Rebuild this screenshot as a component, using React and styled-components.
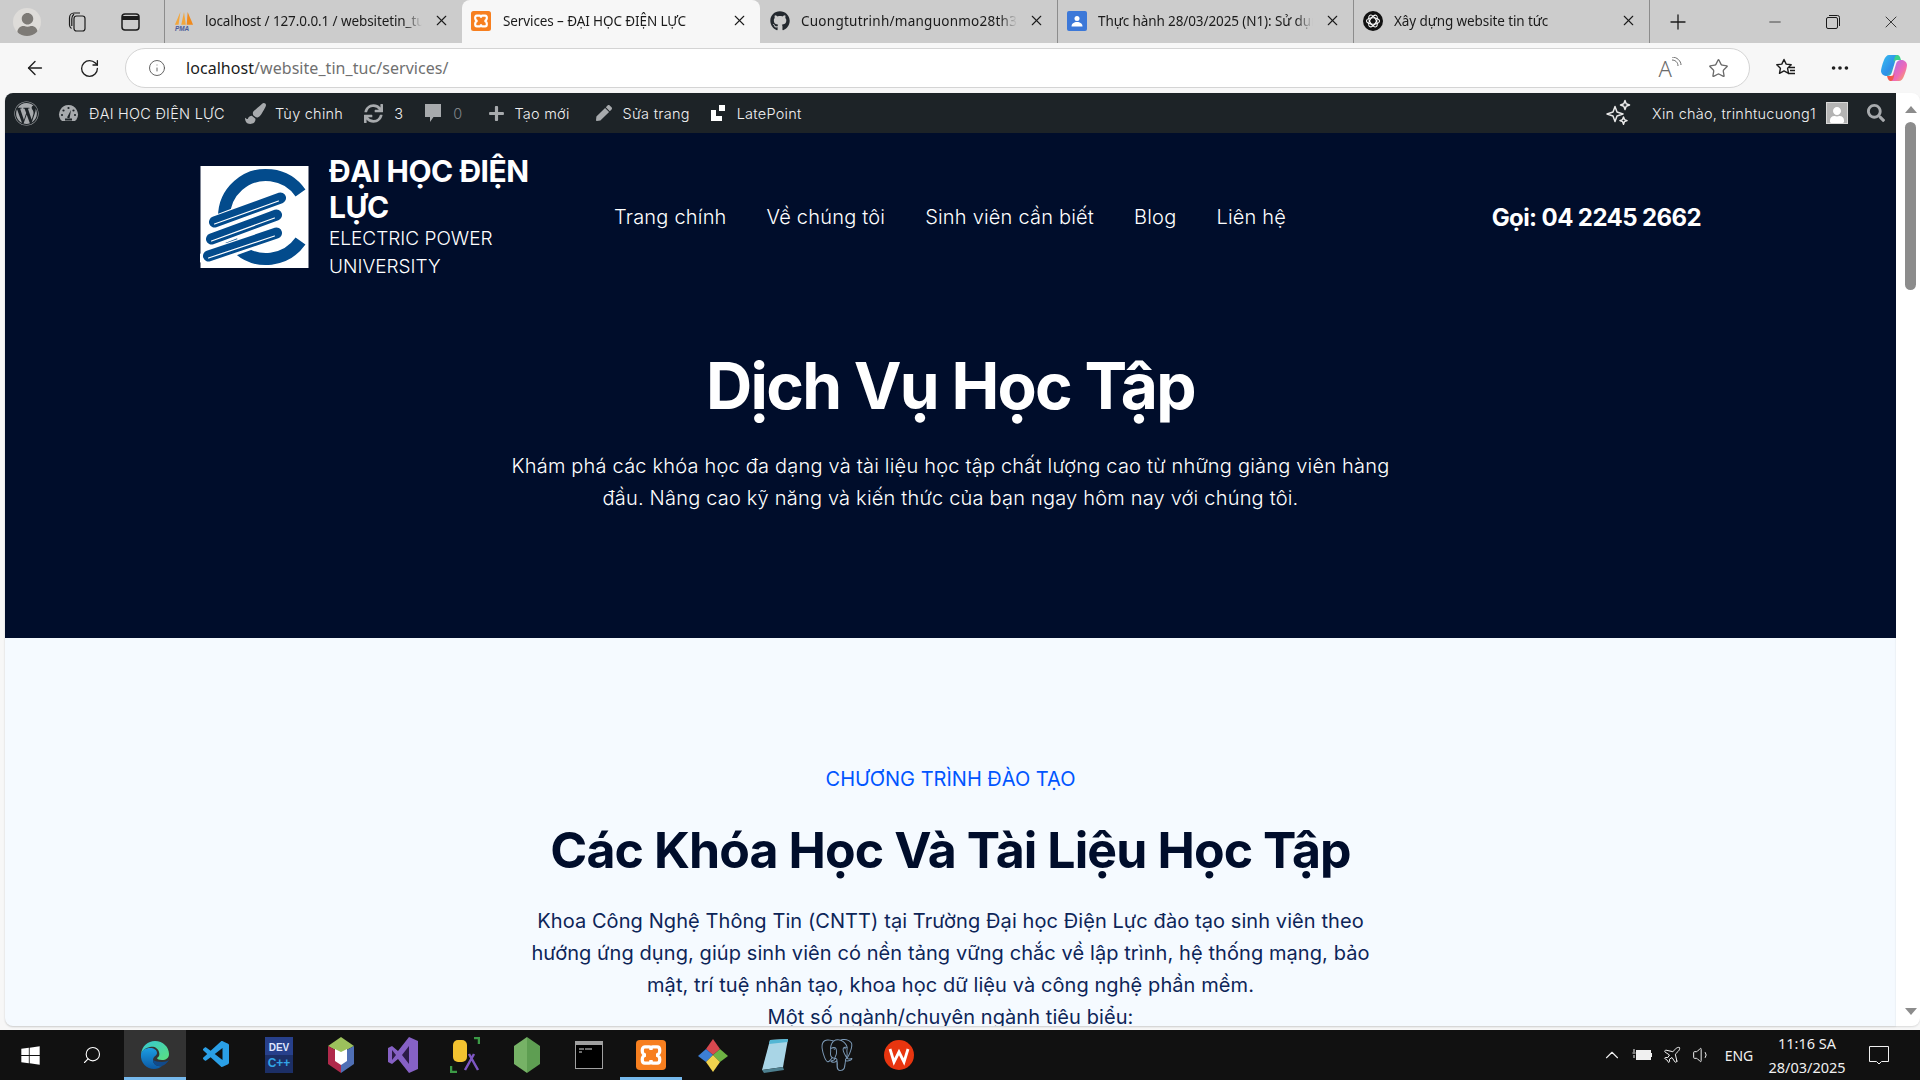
import React from "react";
import styled, { createGlobalStyle } from "styled-components";
import {
  ArrowLeft,
  RotateCw,
  Info,
  Star,
  Ellipsis,
  Plus,
  Minus,
  X,
  ChevronUp,
  Volume1,
  Plane,
  Search,
} from "lucide-react";
import {
  FaWordpress,
  FaPaintBrush,
  FaSync,
  FaPlus,
  FaPen,
  FaSearch,
  FaGithub,
  FaWindows,
  FaUser,
} from "react-icons/fa";
import { VscVscode } from "react-icons/vsc";
import { SiPostgresql } from "react-icons/si";

const GlobalStyle = createGlobalStyle`
  html, body { margin: 0; padding: 0; height: 100%; overflow: hidden; }
  body { font-family: Inter, "Liberation Sans", sans-serif; }
  * { box-sizing: border-box; }
`;

const Screen = styled.div`
  width: 1920px;
  height: 1080px;
  display: flex;
  flex-direction: column;
  background: #f7f7f7;
  overflow: hidden;
`;

/* ---- browser chrome ---- */
const TabStrip = styled.div`
  height: 43px;
  flex: none;
  display: flex;
  align-items: center;
  background: #cccccc;
  color: #1b1b1b;
  font-family: "Noto Sans", sans-serif;
`;
const StripButton = styled.div`
  width: ${(p) => p.$w || 52}px;
  height: 43px;
  flex: none;
  display: flex;
  align-items: center;
  justify-content: center;
`;
const Avatar = styled.div`
  width: 28px;
  height: 28px;
  border-radius: 50%;
  background: #dedcd9;
  overflow: hidden;
  display: flex;
  align-items: flex-end;
  justify-content: center;
  color: #7d7a76;
  font-size: 23px;
  line-height: 0;
`;
const Tab = styled.div`
  width: ${(p) => p.$w}px;
  height: 43px;
  flex: none;
  display: flex;
  align-items: center;
  padding: 0 12px 2px ${(p) => (p.$active ? 8 : 9)}px;
  gap: ${(p) => p.$gap ?? 12}px;
  font-size: 13.5px;
  background: ${(p) => (p.$active ? "#f7f7f7" : "transparent")};
  border-radius: ${(p) => (p.$active ? "8px 8px 0 0" : "0")};
  border-left: 1px solid ${(p) => (p.$sep ? "#8c8c8c" : "transparent")};
  background-clip: ${(p) => (p.$active ? "border-box" : "padding-box")};
`;
const TabIcon = styled.div`
  width: 20px;
  height: 20px;
  flex: none;
  display: flex;
  align-items: center;
  justify-content: center;
`;
const TabTitle = styled.div`
  flex: 1;
  min-width: 0;
  white-space: nowrap;
  overflow: hidden;
  letter-spacing: ${(p) => p.$ls ?? -0.1}px;
  mask-image: linear-gradient(90deg, #000 92%, transparent 100%);
`;
const NewTab = styled.div`
  width: 56px;
  height: 43px;
  flex: none;
  display: flex;
  align-items: center;
  justify-content: center;
  border-left: 1px solid #8c8c8c;
  background-clip: padding-box;
`;
const WindowControls = styled.div`
  margin-left: auto;
  display: flex;
  align-items: center;
`;
const WindowButton = styled.div`
  width: 58px;
  height: 43px;
  display: flex;
  align-items: center;
  justify-content: center;
`;

const Toolbar = styled.div`
  height: 50px;
  flex: none;
  display: flex;
  align-items: center;
  padding-left: 8px;
  color: #1f1f1f;
`;
const ToolButton = styled.div`
  width: ${(p) => p.$w || 54}px;
  height: 40px;
  flex: none;
  display: flex;
  align-items: center;
  justify-content: center;
`;
const AddressBar = styled.div`
  width: 1625px;
  height: 40px;
  flex: none;
  margin: 0 8px 0 9px;
  display: flex;
  align-items: center;
  background: #fff;
  border: 1px solid #d4d4d4;
  border-radius: 20px;
  padding-left: 22px;
  font-family: "Noto Sans", sans-serif;
  font-size: 16px;
`;
const UrlHost = styled.span`
  margin-left: 20px;
  color: #1b1b1b;
  letter-spacing: 0.05px;
`;
const UrlPath = styled.span`
  color: #707070;
  letter-spacing: 0.05px;
`;
const AddressActions = styled.div`
  margin-left: auto;
  display: flex;
  align-items: center;
  gap: 26px;
  padding-right: 20px;
  color: #6b6b6b;
`;
const ReadAloud = styled.div`
  font-size: 22px;
  line-height: 1;
  font-weight: 300;
  color: #6b6b6b;
  display: flex;
  align-items: flex-start;
`;

/* ---- page viewport ---- */
const Viewport = styled.div`
  flex: 1;
  min-height: 0;
  display: flex;
  padding: 0 0 4px 5px;
`;
const Page = styled.main`
  width: 1891px;
  height: 100%;
  overflow: hidden;
  background: #f5faff;
  border-radius: 8px 0 0 8px;
  box-shadow: 0 1px 2px rgba(0, 0, 0, 0.18);
`;
const Scrollbar = styled.div`
  width: 24px;
  height: 100%;
  background: #fff;
  border-radius: 0 8px 8px 0;
  box-shadow: 0 1px 2px rgba(0, 0, 0, 0.12);
  display: flex;
  flex-direction: column;
  align-items: center;
  padding: 13px 0 11px 5px;
`;
const ScrollArrow = styled.div`
  width: 0;
  height: 0;
  border-left: 6.5px solid transparent;
  border-right: 6.5px solid transparent;
  border-bottom: ${(p) => (p.$down ? "0" : "7px solid #8c8c8c")};
  border-top: ${(p) => (p.$down ? "7px solid #8c8c8c" : "0")};
`;
const ScrollThumb = styled.div`
  width: 11px;
  height: 168px;
  margin-top: 9px;
  margin-bottom: auto;
  border-radius: 6px;
  background: #8c8c8c;
`;

/* ---- wordpress admin bar ---- */
const AdminBar = styled.div`
  height: 40px;
  display: flex;
  align-items: center;
  background: #1d2327;
  color: #f0f0f1;
  font-size: 14.5px;
  font-weight: 300;
  letter-spacing: 0.25px;
  padding-left: 9px;
  white-space: nowrap;
`;
const AdminItem = styled.div`
  display: flex;
  align-items: center;
  gap: ${(p) => p.$gap ?? 9}px;
  margin-left: ${(p) => p.$ml ?? 0}px;
  color: ${(p) => (p.$dim ? "#7f8488" : "inherit")};
`;
const AdminIcon = styled.span`
  display: flex;
  align-items: center;
  color: #a7aaad;
  font-size: ${(p) => p.$size || 19}px;
  margin-left: ${(p) => p.$ml ?? 0}px;
`;
const AdminRight = styled.div`
  margin-left: auto;
  display: flex;
  align-items: center;
  padding-right: 11px;
`;
const UserPic = styled.div`
  width: 22px;
  height: 22px;
  margin-left: 10px;
  background: #b4b4b4;
  border: 1px solid #d8d8d8;
  display: flex;
  align-items: flex-end;
  justify-content: center;
  overflow: hidden;
  color: #fff;
  font-size: 16px;
  line-height: 0;
`;

/* ---- hero ---- */
const Hero = styled.section`
  background: #000d2b;
  color: #fff;
  height: 505px;
`;
const SiteHeader = styled.header`
  display: flex;
  align-items: center;
  padding: 20px 195px 0;
`;
const Brand = styled.div`
  width: 414px;
  flex: none;
  display: flex;
  align-items: center;
  gap: 20px;
`;
const BrandText = styled.div`
  width: 220px;
`;
const BrandName = styled.div`
  font-size: 30px;
  line-height: 36px;
  font-weight: 700;
  letter-spacing: -0.5px;
`;
const BrandSub = styled.div`
  font-size: 19px;
  line-height: 28px;
  font-weight: 300;
`;
const Nav = styled.nav`
  display: flex;
  gap: 40px;
  font-size: 20px;
  font-weight: 300;
  letter-spacing: 0.2px;
`;
const Phone = styled.div`
  margin-left: auto;
  font-size: 24px;
  font-weight: 700;
  letter-spacing: -0.6px;
`;
const HeroTitle = styled.h1`
  margin: 69px 0 0;
  font-size: 64px;
  line-height: 72px;
  font-weight: 700;
  letter-spacing: -1.7px;
  text-align: center;
`;
const HeroText = styled.p`
  width: 900px;
  margin: 28px auto 0;
  font-size: 20px;
  line-height: 32px;
  font-weight: 300;
  letter-spacing: 0.2px;
  text-align: center;
`;

/* ---- courses section ---- */
const Courses = styled.section`
  padding-top: 127px;
  text-align: center;
  color: #000d2b;
`;
const Eyebrow = styled.div`
  font-size: 20px;
  line-height: 28px;
  color: #0055ff;
`;
const SectionTitle = styled.h2`
  margin: 28px 0 0;
  font-size: 50px;
  line-height: 58px;
  font-weight: 700;
  letter-spacing: -0.9px;
`;
const SectionText = styled.p`
  width: 860px;
  margin: 26px auto 0;
  font-size: 20px;
  line-height: 32px;
  letter-spacing: 0.08px;
  color: #0d2558;
`;

/* ---- taskbar ---- */
const Taskbar = styled.div`
  height: 50px;
  flex: none;
  display: flex;
  align-items: center;
  background: #111111;
  color: #fff;
  font-family: "Noto Sans", sans-serif;
`;
const StartButton = styled.div`
  width: ${(p) => p.$w}px;
  height: 50px;
  flex: none;
  display: flex;
  align-items: center;
  justify-content: center;
`;
const TaskIcon = styled.div`
  width: 62px;
  height: 50px;
  flex: none;
  display: flex;
  align-items: center;
  justify-content: center;
  background: ${(p) => (p.$focused ? "#333333" : "transparent")};
  box-shadow: ${(p) => (p.$open ? "inset 0 -3px 0 #76b9ed" : "none")};
`;
const Tray = styled.div`
  margin-left: auto;
  display: flex;
  align-items: center;
  color: #f0f0f0;
`;
const TrayIcon = styled.div`
  width: 30px;
  display: flex;
  align-items: center;
  justify-content: center;
`;
const TrayText = styled.div`
  width: 42px;
  margin-left: 1px;
  text-align: center;
  font-size: 14px;
`;
const Clock = styled.div`
  width: 86px;
  margin-left: 4px;
  text-align: center;
  font-size: 14.5px;
  line-height: 24px;
`;
const Notify = styled.div`
  width: 70px;
  display: flex;
  justify-content: center;
  padding-right: 12px;
`;

/* ---- drawn icons ---- */
const XamppIcon = ({ size = 20 }) => (
  <svg width={size} height={size} viewBox="0 0 24 24">
    <rect width="24" height="24" rx="3" fill="#f77f1f" />
    <path
      d="M7 5.500h3.500c1 0 1.500 1.200 1.500 2.500 0-1.300.5-2.500 1.500-2.500H17c1.500 0 2 1.500 2 3s-1 3.500-3 3.500c2 0 3 2 3 3.500s-.5 3-2 3h-3.500c-1 0-1.500-1.200-1.500-2.500 0 1.300-.5 2.500-1.500 2.500H7c-1.500 0-2-1.500-2-3s1-3.500 3-3.500c-2 0-3-2-3-3.500s.5-3 2-3z"
      fill="none"
      stroke="#fff"
      strokeWidth="2.600"
    />
  </svg>
);

const PmaIcon = () => (
  <svg width="22" height="22" viewBox="0 0 22 22">
    <path d="M7 1 1 15h4z" fill="#f2a63c" />
    <path d="M11 1 8 15h5z" fill="#f2a63c" />
    <path d="M15 1l-1 14h7z" fill="#f08a1d" />
    <text x="1" y="21.500" fontSize="7" fontWeight="700" fontStyle="italic" fill="#4a5a9a" fontFamily="Liberation Sans, sans-serif">
      PMA
    </text>
  </svg>
);

const ClassroomIcon = () => (
  <svg width="20" height="20" viewBox="0 0 20 20">
    <rect width="20" height="20" rx="2" fill="#3c78d8" />
    <circle cx="10" cy="7.500" r="2.500" fill="#fff" />
    <path d="M4.500 15.500c0-3 2.500-4.500 5.500-4.500s5.500 1.500 5.500 4.500z" fill="#fff" />
  </svg>
);

const OpenAiIcon = () => (
  <svg width="20" height="20" viewBox="0 0 20 20">
    <circle cx="10" cy="10" r="10" fill="#111" />
    <g fill="none" stroke="#fff" strokeWidth="1.100">
      <ellipse cx="10" cy="10" rx="6.500" ry="3.200" />
      <ellipse cx="10" cy="10" rx="6.500" ry="3.200" transform="rotate(60 10 10)" />
      <ellipse cx="10" cy="10" rx="6.500" ry="3.200" transform="rotate(120 10 10)" />
    </g>
  </svg>
);

const RestoreIcon = () => (
  <svg width="14" height="14" viewBox="0 0 14 14" fill="none" stroke="#1b1b1b" strokeWidth="1">
    <rect x="0.500" y="2.500" width="11" height="11" rx="1.500" />
    <path d="M3 .5h8.500a2 2 0 0 1 2 2V11" />
  </svg>
);

const FavoritesIcon = () => (
  <svg width="22" height="22" viewBox="0 0 22 22" fill="none" stroke="#1b1b1b" strokeWidth="1.400">
    <path d="M9 2.500l2.200 4.600 5 .7-3.600 3.500.9 5L9 13.900l-4.500 2.400.9-5L1.800 7.800l5-.7z" strokeLinejoin="round" />
    <path d="M14 10.500h6M15 13.500h5M13 16.500h7" />
  </svg>
);

const CopilotIcon = () => (
  <svg width="28" height="28" viewBox="0 0 28 28">
    <defs>
      <linearGradient id="cpA" x1="0" y1="0" x2="1" y2="1">
        <stop offset="0" stopColor="#35c1f1" />
        <stop offset="0.600" stopColor="#2f8fe8" />
        <stop offset="1" stopColor="#3bd18b" />
      </linearGradient>
      <linearGradient id="cpB" x1="0" y1="0" x2="1" y2="1">
        <stop offset="0" stopColor="#a66bf0" />
        <stop offset="0.600" stopColor="#f06bb5" />
        <stop offset="1" stopColor="#f9b34c" />
      </linearGradient>
    </defs>
    <path d="M9 1h8l-5 17c-1 3-2.500 4-5 4-3 0-6-2-6-5 0-2 1-6 3-11 1-3 3-5 5-5z" fill="url(#cpA)" />
    <path d="M19 27h-8l5-17c1-3 2.500-4 5-4 3 0 6 2 6 5 0 2-1 6-3 11-1 3-3 5-5 5z" fill="url(#cpB)" />
    <path d="M17 1c2 0 3 1 4 5h-4c-2 0-3 1-4 4l1.500-6c.5-2 1.500-3 2.500-3z" fill="#3bd18b" />
    <path d="M11 27c-2 0-3-1-4-5h4c2 0 3-1 4-4l-1.500 6c-.5 2-1.500 3-2.500 3z" fill="#f2594b" />
  </svg>
);

const LatePointIcon = () => (
  <svg width="16" height="16" viewBox="0 0 16 16" fill="#fff">
    <path d="M0 5h5v6h6v5H0z" />
    <rect x="8" y="0" width="6" height="6" />
  </svg>
);

const GaugeIcon = () => (
  <svg width="21" height="21" viewBox="0 0 21 21">
    <path d="M10.500 2a9.500 9.500 0 0 1 8 14.500l-1.500 1.500H4l-1.500-1.500a9.500 9.500 0 0 1 8-14.500z" fill="#a7aaad" />
    <g fill="#1d2327">
      <circle cx="10.500" cy="5" r="1.100" />
      <circle cx="5.500" cy="7.500" r="1.100" />
      <circle cx="4" cy="12" r="1.100" />
      <circle cx="15.500" cy="7.500" r="1.100" />
      <circle cx="17" cy="12" r="1.100" />
      <path d="M9 14.500 13 7l-1.500 8.500z" />
      <rect x="7" y="15.500" width="7" height="2" />
    </g>
  </svg>
);

const CommentIcon = () => (
  <svg width="18" height="20" viewBox="0 0 18 20" fill="#a7aaad">
    <path d="M1 1h16v13H9.500L6 19v-5H1z" />
  </svg>
);

const SparkleIcon = () => (
  <svg width="28" height="28" viewBox="0 0 28 28" fill="none" stroke="#e8e8e8" strokeWidth="1.500" strokeLinejoin="round">
    <path d="M11 7.500l2 5.500 6 2-6 2-2 5.500-2-5.500-6-2 6-2z" />
    <path d="M21 1.500l1.200 3.300 3.300 1.200-3.300 1.200L21 10.500l-1.200-3.300L16.500 6l3.300-1.200z" />
    <path d="M19.500 18l1 2.600 2.600 1-2.600 1-1 2.600-1-2.600-2.600-1 2.600-1z" />
  </svg>
);

const BatteryIcon = () => (
  <svg width="20" height="14" viewBox="0 0 20 14" fill="none" stroke="#f0f0f0">
    <rect x="4.500" y="2.500" width="14" height="9" fill="#f0f0f0" />
    <path d="M19.500 5v4M.5 5h3M2 1v3M2 7v3" />
  </svg>
);

const NotifyIcon = () => (
  <svg width="20" height="20" viewBox="0 0 20 20" fill="none" stroke="#f0f0f0">
    <path d="M.5 1.500h19v15h-7L10 19l-2.500-2.500h-7z" />
  </svg>
);

const EdgeIcon = () => (
  <svg width="30" height="30" viewBox="0 0 30 30">
    <defs>
      <linearGradient id="edgeA" x1="0" y1="0" x2="1" y2="1">
        <stop offset="0" stopColor="#35c7d4" />
        <stop offset="1" stopColor="#5be07d" />
      </linearGradient>
      <linearGradient id="edgeB" x1="0" y1="0" x2="0" y2="1">
        <stop offset="0" stopColor="#1b9de2" />
        <stop offset="1" stopColor="#0c59a4" />
      </linearGradient>
    </defs>
    <path d="M1 14C2 6 8 1 15 1c8 0 14 6 14 13 0 4-3 6-7 6-3 0-5-1-5-2 2-1 3-3 2-6-1-4-5-6-9-5-5 1-8 4-9 7z" fill="url(#edgeA)" />
    <path d="M1 14c1-4 5-6 9-6 4 0 7 2 7 5 0 3-4 3-4 7 0 4 4 7 9 6-2 2-5 3-8 3C7 29 0 23 1 14z" fill="url(#edgeB)" />
    <path d="M13 20c0 4 4 7 9 6 3-1 5-3 7-6-2 1-4 2-7 2-4 0-7-1-9-2z" fill="#114a8b" />
  </svg>
);

const DevCppIcon = () => (
  <svg width="28" height="36" viewBox="0 0 28 36">
    <rect width="28" height="36" fill="#27408b" />
    <rect y="18" width="28" height="18" fill="#1c2f66" />
    <text x="14" y="14" textAnchor="middle" fontSize="10" fontWeight="700" fill="#dfe6ff" fontFamily="Liberation Sans, sans-serif">
      DEV
    </text>
    <text x="14" y="30" textAnchor="middle" fontSize="12" fontWeight="700" fill="#33a6e8" fontFamily="Liberation Sans, sans-serif">
      C++
    </text>
  </svg>
);

const BoxIcon = () => (
  <svg width="28" height="36" viewBox="0 0 28 36">
    <path d="M14 0l13 9L14 16 1 9z" fill="#9cc15c" />
    <path d="M1 9l13 7v20L1 27z" fill="#b0294a" />
    <path d="M27 9L14 16v20l13-9z" fill="#4f6fb5" />
    <path d="M8 12l6 3 6-3v12l-6 4-6-4z" fill="#fff" />
  </svg>
);

const VisualStudioIcon = () => (
  <svg width="30" height="36" viewBox="0 0 30 36">
    <path d="M21 0l9 4v28l-9 4-11-14-6 5-4-2V11l4-2 6 5z" fill="#8661c5" />
    <path d="M21 9l-7 9 7 9zM4 13v10l4-5z" fill="#2b1b46" />
  </svg>
);

const SqlToolIcon = () => (
  <svg width="30" height="36" viewBox="0 0 30 36">
    <rect x="3" y="3" width="14" height="22" rx="5" fill="#f2c230" />
    <path d="M24 1h5v6M1 29v6h6" fill="none" stroke="#3c9a46" strokeWidth="2.500" />
    <path d="M15 33l9-16M28 33l-9-16" stroke="#7e57c2" strokeWidth="2.500" />
  </svg>
);

const NodeIcon = () => (
  <svg width="26" height="36" viewBox="0 0 26 36">
    <path d="M13 0l13 9v18l-13 9z" fill="#5e9e52" />
    <path d="M13 0 0 9v18l13 9z" fill="#76b266" />
  </svg>
);

const CmdIcon = () => (
  <svg width="28" height="28" viewBox="0 0 28 28">
    <rect width="28" height="28" fill="#a0a0a0" />
    <rect x="1" y="4" width="26" height="23" fill="#000" />
    <path d="M4 8h5M10 8h7M4 11h3" stroke="#ddd" strokeWidth="1" />
  </svg>
);

const GitToolIcon = () => (
  <svg width="30" height="36" viewBox="0 0 30 36">
    <path d="M15 2l7 10-7 6-7-6z" fill="#d6484f" />
    <path d="M22 12l8 7-8 6-7-7z" fill="#6eb343" />
    <path d="M8 12l7 6-7 7-8-6z" fill="#3c7fd6" />
    <path d="M15 18l7 7-7 10-7-10z" fill="#f1d34e" />
  </svg>
);

const NotepadIcon = () => (
  <svg width="28" height="36" viewBox="0 0 28 36">
    <path d="M9 3l18-1-5 28L1 33z" fill="#a9d5e6" />
    <path d="M9 3l18-1-.5 3L8 7z" fill="#53b6d4" />
    <path d="M1 33l21-3 1 3L3 36z" fill="#4d7f8e" />
  </svg>
);

const WpsIcon = () => (
  <svg width="30" height="30" viewBox="0 0 30 30">
    <circle cx="15" cy="15" r="15" fill="#e8350f" />
    <path d="M6 9l4 13 5-10 5 10 4-13" fill="none" stroke="#fff" strokeWidth="2.800" />
  </svg>
);

const SchoolLogo = () => (
  <svg width="109" height="102" viewBox="0 0 108 102">
    <rect width="108" height="102" fill="#fff" />
    <path d="M100 27A42 42 0 1 0 100 75" fill="none" stroke="#034b8c" strokeWidth="12" />
    <g strokeLinecap="round">
      <path d="M12 58 82 31M9 75 79 48M6 92 79 66" stroke="#fff" strokeWidth="15" />
      <path d="M14 56 80 32M11 73 76 49M8 90 76 67" stroke="#034b8c" strokeWidth="11" />
      <path d="M14 58 78 35M11 75 74 52M8 92 74 70" stroke="#fff" strokeWidth="1.200" />
    </g>
  </svg>
);

const tabs = [
  { title: "localhost / 127.0.0.1 / websitetin_tuc | phpMyAdmin", icon: <PmaIcon />, sep: true, w: 298, gap: 11 },
  { title: "Services – ĐẠI HỌC ĐIỆN LỰC", icon: <XamppIcon />, active: true, w: 298 },
  { title: "Cuongtutrinh/manguonmo28th3", icon: <FaGithub size={20} color="#24292f" />, w: 297, gap: 11, ls: 0.25 },
  { title: "Thực hành 28/03/2025 (N1): Sử dụng", icon: <ClassroomIcon />, sep: true, w: 296, gap: 11 },
  { title: "Xây dựng website tin tức", icon: <OpenAiIcon />, sep: true, w: 296, gap: 11 },
];

const navLinks = ["Trang chính", "Về chúng tôi", "Sinh viên cần biết", "Blog", "Liên hệ"];

export default function App() {
  return (
    <Screen>
      <GlobalStyle />

      <TabStrip>
        <StripButton $w={54}>
          <Avatar>
            <FaUser />
          </Avatar>
        </StripButton>
        <StripButton $w={46}>
          <svg width="22" height="22" viewBox="0 0 22 22" fill="none" stroke="#1b1b1b" strokeWidth="1.200">
            <rect x="8" y="5" width="11" height="15" rx="2.500" />
            <path d="M5.500 17.500C4 16.500 3.500 15 3.500 14V7c0-3 2-5 4.500-5h6" />
            <path d="M8 3C6.500 4.500 5.800 6 5.800 8v7" />
          </svg>
        </StripButton>
        <StripButton $w={60}>
          <svg width="19" height="18" viewBox="0 0 19 18" fill="none" stroke="#1b1b1b" strokeWidth="1.500">
            <rect x="1" y="1" width="17" height="16" rx="3" />
            <path d="M1 5h17" strokeWidth="4" />
          </svg>
        </StripButton>
        <StripButton $w={4} />
        {tabs.map((tab) => (
          <Tab key={tab.title} $active={tab.active} $sep={tab.sep} $w={tab.w} $gap={tab.gap}>
            <TabIcon>{tab.icon}</TabIcon>
            <TabTitle $ls={tab.ls}>{tab.title}</TabTitle>
            <X size={17} strokeWidth={1.500} />
          </Tab>
        ))}
        <NewTab>
          <Plus size={24} strokeWidth={1.300} />
        </NewTab>
        <WindowControls>
          <WindowButton>
            <Minus size={18} strokeWidth={1} />
          </WindowButton>
          <WindowButton>
            <RestoreIcon />
          </WindowButton>
          <WindowButton>
            <X size={20} strokeWidth={1} />
          </WindowButton>
        </WindowControls>
      </TabStrip>

      <Toolbar>
        <ToolButton>
          <ArrowLeft size={22} strokeWidth={1.500} />
        </ToolButton>
        <ToolButton>
          <RotateCw size={21} strokeWidth={1.500} />
        </ToolButton>
        <AddressBar>
          <Info size={18} strokeWidth={1.200} color="#555" />
          <UrlHost>localhost</UrlHost>
          <UrlPath>/website_tin_tuc/services/</UrlPath>
          <AddressActions>
            <ReadAloud>
              A
              <svg width="10" height="16" viewBox="0 0 10 16" fill="none" stroke="#6b6b6b">
                <path d="M0 3c3 0 6 2 6 6M0 0c5 0 9 4 9 8" />
              </svg>
            </ReadAloud>
            <Star size={21} strokeWidth={1.500} />
          </AddressActions>
        </AddressBar>
        <ToolButton $w={56}>
          <FavoritesIcon />
        </ToolButton>
        <ToolButton $w={52}>
          <Ellipsis size={22} />
        </ToolButton>
        <ToolButton $w={56}>
          <CopilotIcon />
        </ToolButton>
      </Toolbar>

      <Viewport>
        <Page>
          <AdminBar>
            <AdminIcon $size={25}>
              <FaWordpress />
            </AdminIcon>
            <AdminItem $ml={19} $gap={10}>
              <GaugeIcon />
              ĐẠI HỌC ĐIỆN LỰC
            </AdminItem>
            <AdminItem $ml={20} $gap={9}>
              <AdminIcon $size={21}>
                <FaPaintBrush />
              </AdminIcon>
              Tùy chỉnh
            </AdminItem>
            <AdminItem $ml={21} $gap={11}>
              <AdminIcon>
                <FaSync />
              </AdminIcon>
              3
            </AdminItem>
            <AdminItem $ml={21} $gap={11} $dim>
              <AdminIcon>
                <CommentIcon />
              </AdminIcon>
              0
            </AdminItem>
            <AdminItem $ml={26}>
              <AdminIcon $size={17}>
                <FaPlus />
              </AdminIcon>
              Tạo mới
            </AdminItem>
            <AdminItem $ml={26} $gap={11}>
              <AdminIcon $size={16}>
                <FaPen />
              </AdminIcon>
              Sửa trang
            </AdminItem>
            <AdminItem $ml={21} $gap={10}>
              <LatePointIcon />
              LatePoint
            </AdminItem>
            <AdminRight>
              <SparkleIcon />
              <AdminItem $ml={20} $gap={0}>
                Xin chào, trinhtucuong1
                <UserPic>
                  <FaUser />
                </UserPic>
              </AdminItem>
              <AdminIcon $size={18} $ml={19}>
                <FaSearch />
              </AdminIcon>
            </AdminRight>
          </AdminBar>

          <Hero>
            <SiteHeader>
              <Brand>
                <SchoolLogo />
                <BrandText>
                  <BrandName>ĐẠI HỌC ĐIỆN LỰC</BrandName>
                  <BrandSub>ELECTRIC POWER UNIVERSITY</BrandSub>
                </BrandText>
              </Brand>
              <Nav>
                {navLinks.map((link) => (
                  <span key={link}>{link}</span>
                ))}
              </Nav>
              <Phone>Gọi: 04 2245 2662</Phone>
            </SiteHeader>
            <HeroTitle>Dịch Vụ Học Tập</HeroTitle>
            <HeroText>
              Khám phá các khóa học đa dạng và tài liệu học tập chất lượng cao từ những giảng viên hàng đầu. Nâng cao kỹ
              năng và kiến thức của bạn ngay hôm nay với chúng tôi.
            </HeroText>
          </Hero>

          <Courses>
            <Eyebrow>CHƯƠNG TRÌNH ĐÀO TẠO</Eyebrow>
            <SectionTitle>Các Khóa Học Và Tài Liệu Học Tập</SectionTitle>
            <SectionText>
              Khoa Công Nghệ Thông Tin (CNTT) tại Trường Đại học Điện Lực đào tạo sinh viên theo hướng ứng dụng, giúp sinh
              viên có nền tảng vững chắc về lập trình, hệ thống mạng, bảo mật, trí tuệ nhân tạo, khoa học dữ liệu và công
              nghệ phần mềm.
              <br />
              Một số ngành/chuyên ngành tiêu biểu:
            </SectionText>
          </Courses>
        </Page>
        <Scrollbar>
          <ScrollArrow />
          <ScrollThumb />
          <ScrollArrow $down />
        </Scrollbar>
      </Viewport>

      <Taskbar>
        <StartButton $w={60}>
          <FaWindows size={21} />
        </StartButton>
        <StartButton $w={64}>
          <Search size={20} strokeWidth={1.300} style={{ transform: "scaleX(-1)" }} />
        </StartButton>
        <TaskIcon $focused $open>
          <EdgeIcon />
        </TaskIcon>
        <TaskIcon>
          <VscVscode size={32} color="#2a9fe6" />
        </TaskIcon>
        <TaskIcon>
          <DevCppIcon />
        </TaskIcon>
        <TaskIcon>
          <BoxIcon />
        </TaskIcon>
        <TaskIcon>
          <VisualStudioIcon />
        </TaskIcon>
        <TaskIcon>
          <SqlToolIcon />
        </TaskIcon>
        <TaskIcon>
          <NodeIcon />
        </TaskIcon>
        <TaskIcon>
          <CmdIcon />
        </TaskIcon>
        <TaskIcon $open>
          <XamppIcon size={30} />
        </TaskIcon>
        <TaskIcon>
          <GitToolIcon />
        </TaskIcon>
        <TaskIcon>
          <NotepadIcon />
        </TaskIcon>
        <TaskIcon>
          <SiPostgresql size={32} color="#7d9bb8" />
        </TaskIcon>
        <TaskIcon>
          <WpsIcon />
        </TaskIcon>
        <Tray>
          <TrayIcon>
            <ChevronUp size={22} strokeWidth={1.200} />
          </TrayIcon>
          <TrayIcon>
            <BatteryIcon />
          </TrayIcon>
          <TrayIcon>
            <Plane size={20} strokeWidth={1.200} />
          </TrayIcon>
          <TrayIcon>
            <Volume1 size={20} strokeWidth={1.200} />
          </TrayIcon>
          <TrayText>ENG</TrayText>
          <Clock>
            11:16 SA
            <br />
            28/03/2025
          </Clock>
          <Notify>
            <NotifyIcon />
          </Notify>
        </Tray>
      </Taskbar>
    </Screen>
  );
}
